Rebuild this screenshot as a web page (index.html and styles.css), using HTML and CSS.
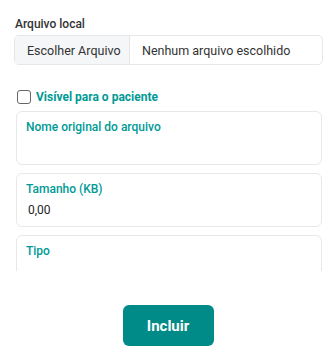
FILE: index.html
```html
<!DOCTYPE html>
<html lang="pt-BR">
<head>
  <meta charset="UTF-8" />
  <title>Anexar arquivo</title>
  <link rel="stylesheet" href="styles.css">
</head>
<body>
  <div class="form">
    <div class="field">
      <label class="field-label">Arquivo local</label>
      <div class="file-input">
        <span class="file-btn">Escolher Arquivo</span>
        <span class="file-name">Nenhum arquivo escolhido</span>
      </div>
    </div>

    <label class="check">
      <span class="check-box"></span>
      <span>Visível para o paciente</span>
    </label>

    <div class="cards">
      <div class="card">
        <div class="card-label">Nome original do arquivo</div>
        <div class="card-value"></div>
      </div>
      <div class="card">
        <div class="card-label">Tamanho (KB)</div>
        <div class="card-value">0,00</div>
      </div>
      <div class="card">
        <div class="card-label">Tipo</div>
        <div class="card-value"></div>
      </div>
    </div>

    <div class="actions">
      <button class="btn">Incluir</button>
    </div>
  </div>
</body>
</html>
```

FILE: styles.css
```css
body {
  margin: 0;
  background: #fff;
  font-family: Roboto, "Liberation Sans", sans-serif;
  color: #333;
}
.form {
  width: 336px;
  height: 353px;
  overflow: hidden;
}
.field {
  padding: 16px 13px 0 14px;
}
.field-label {
  display: block;
  font-size: 12px;
  font-weight: 500;
  line-height: 16px;
  margin-bottom: 3px;
  padding-left: 1px;
}
.file-input {
  display: flex;
  height: 30px;
  border: 1px solid #e6e7ea;
  border-radius: 5px;
  box-sizing: border-box;
  font-size: 12.5px;
  overflow: hidden;
}
.file-btn {
  display: flex;
  align-items: center;
  width: 115px;
  padding-left: 12px;
  box-sizing: border-box;
  background: #f5f6f8;
  border-right: 1px solid #e6e7ea;
}
.file-name {
  display: flex;
  align-items: center;
  padding-left: 12px;
}
.check {
  display: flex;
  align-items: center;
  gap: 5px;
  margin: 25px 0 0 17px;
  font-size: 12px;
  font-weight: 700;
  color: #009a96;
}
.check-box {
  width: 12px;
  height: 12px;
  border: 1px solid #666;
  border-radius: 3px;
}
.cards {
  display: flex;
  flex-direction: column;
  gap: 8px;
  margin: 7px 14px 0 16px;
  height: 160px;
  overflow: hidden;
}
.card {
  flex: none;
  height: 54px;
  box-sizing: border-box;
  border: 1px solid #e8e8e8;
  border-radius: 6px;
  padding: 8px 9px;
}
.card-label {
  font-size: 12px;
  font-weight: 500;
  color: #009a96;
  line-height: 14px;
}
.card-value {
  font-size: 12px;
  line-height: 16px;
  margin-top: 6px;
  padding-left: 2px;
  color: #222;
}
.actions {
  display: flex;
  justify-content: center;
  margin-top: 34px;
}
.btn {
  width: 91px;
  height: 41px;
  border: none;
  border-radius: 6px;
  background: #008b88;
  color: #fff;
  font-family: Roboto, "Liberation Sans", sans-serif;
  font-size: 15px;
  font-weight: 700;
  cursor: pointer;
}
```
